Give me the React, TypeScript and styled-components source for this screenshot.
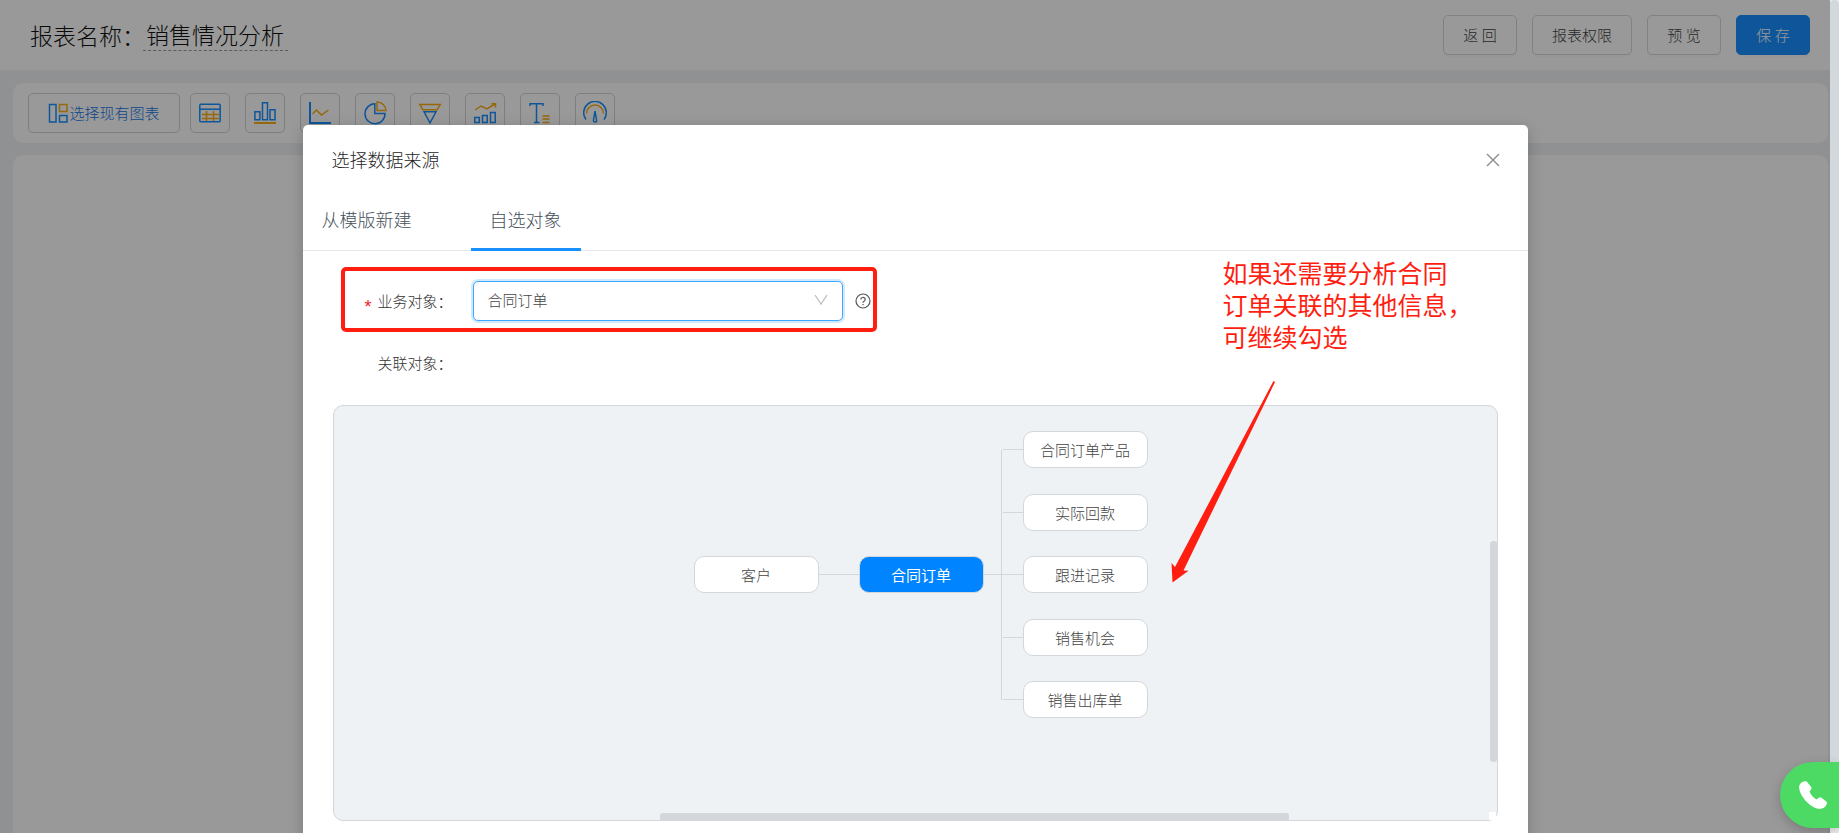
import React from "react";
import styled, { createGlobalStyle, css } from "styled-components";

const GlobalStyle = createGlobalStyle`
  *, *::before, *::after { box-sizing: border-box; }
  html, body, #root { height: 100%; margin: 0; }
  body {
    font-family: "Noto Sans CJK SC", "Liberation Sans", sans-serif;
    font-weight: 300;
    font-size: 15px;
    color: #444;
    overflow: hidden;
    background: #fff;
  }
  button, select { font: inherit; color: inherit; }
  h1, h2, p { margin: 0; font-weight: 300; }
`;

const BLUE = "#1890ff";
const ORANGE = "#faad14";
const LINE = "#d3d7db";
const RED = "#ff1e10";

const Shell = styled.div`
  display: flex;
  height: 100vh;
`;

const Page = styled.div`
  flex: 1;
  min-width: 0;
  position: relative;
  display: flex;
  flex-direction: column;
  overflow: hidden;
  background: #eff2f5;
`;

const PageScroll = styled.div`
  width: 9px;
  padding-bottom: 5px;
  background: #f0f0f0;
`;

const PageThumb = styled.div`
  height: 100%;
  border-radius: 4px;
  background: #d3d8dc;
`;

const Header = styled.header`
  flex: none;
  display: flex;
  align-items: center;
  justify-content: space-between;
  height: 70px;
  padding: 0 20px 0 30px;
  background: #fff;
`;

const Heading = styled.h1`
  display: flex;
  align-items: center;
  font-size: 23px;
  line-height: 28px;
  color: #111;
`;

const ReportName = styled.span`
  margin-left: -2px;
  padding: 0 4px 2px 3px;
  border-bottom: 1px dashed #999;
`;

const Actions = styled.div`
  display: flex;
  gap: 15px;
`;

const Button = styled.button<{ $primary?: boolean; $wide?: boolean }>`
  height: 40px;
  width: ${(p) => (p.$wide ? 100 : 74)}px;
  padding: 0 0 1px;
  border: 1px solid ${(p) => (p.$primary ? BLUE : "#d9d9d9")};
  border-radius: 5px;
  background: ${(p) => (p.$primary ? BLUE : "#fff")};
  color: ${(p) => (p.$primary ? "#fff" : "#444")};
  line-height: 22px;
  box-shadow: 0 2px 0 rgba(0, 0, 0, 0.02);
`;

const Toolbar = styled.div`
  flex: none;
  display: flex;
  align-items: center;
  gap: 15px;
  height: 60px;
  margin: 13px 2px 12px 13px;
  padding: 0 15px;
  border-radius: 10px;
  background: #fff;
`;

const PickButton = styled.button`
  display: flex;
  align-items: center;
  justify-content: center;
  gap: 1px;
  width: 152px;
  height: 40px;
  margin-right: -5px;
  padding: 0;
  border: 1px solid #d3d3d3;
  border-radius: 5px;
  background: #fff;
  color: #1677e6;
`;

const PickText = styled.span`
  padding-bottom: 2px;
`;

const ToolButton = styled.button`
  display: flex;
  align-items: center;
  justify-content: center;
  width: 40px;
  height: 40px;
  padding: 0;
  border: 1px solid #d3d3d3;
  border-radius: 5px;
  background: #fff;
`;

const Canvas = styled.main`
  flex: 1;
  margin: 0 2px 0 13px;
  border-radius: 10px 10px 0 0;
  background: #fff;
`;

const Mask = styled.div`
  position: absolute;
  inset: 0;
  display: flex;
  justify-content: center;
  padding: 125px 20px 0;
  background: rgba(0, 0, 0, 0.4);
`;

const Modal = styled.section`
  position: relative;
  width: 100%;
  max-width: 1225px;
  min-height: 720px;
  border-radius: 5px;
  background: #fff;
  box-shadow: 0 4px 15px rgba(0, 0, 0, 0.2);
`;

const ModalHead = styled.div`
  display: flex;
  align-items: center;
  justify-content: space-between;
  height: 70px;
  padding: 0 25px 0 29px;
`;

const ModalTitle = styled.h2`
  padding-bottom: 2px;
  font-size: 18px;
  line-height: 28px;
  color: #262626;
`;

const CloseButton = styled.button`
  display: flex;
  align-items: center;
  justify-content: center;
  width: 20px;
  height: 20px;
  padding: 0;
  border: 0;
  background: none;
`;

const Tabs = styled.div`
  display: flex;
  gap: 40px;
  height: 56px;
  border-bottom: 1px solid #e5e7e9;
`;

const Tab = styled.button<{ $active?: boolean }>`
  height: 56px;
  padding: 0 19px 5px;
  border: 0;
  border-bottom: 3px solid ${(p) => (p.$active ? BLUE : "transparent")};
  background: none;
  font-size: 18px;
  color: #45505a;
`;

const Form = styled.form`
  padding: 30px 30px 0;
`;

const Row = styled.div`
  display: flex;
  align-items: center;
  height: 40px;
  margin-bottom: 22px;
`;

const Label = styled.label<{ $required?: boolean }>`
  width: 140px;
  padding-left: 45px;
  line-height: 22px;
  color: #333;
  ${(p) =>
    p.$required &&
    css`
      padding-left: 32px;
      &::before {
        content: "*";
        display: inline-block;
        width: 13px;
        font-family: "Liberation Sans", sans-serif;
        font-size: 18px;
        line-height: 10px;
        vertical-align: -6px;
        color: #f5222d;
      }
    `}
`;

const SelectWrap = styled.div`
  position: relative;
  width: 370px;
  margin-right: 12px;
`;

const Select = styled.select`
  display: block;
  width: 100%;
  height: 40px;
  padding: 0 40px 4px 14px;
  appearance: none;
  border: 1px solid #40a9ff;
  border-radius: 5px;
  outline: none;
  background: #fff;
  box-shadow: 0 0 0 2px rgba(24, 144, 255, 0.2);
  color: #444;
`;

const SelectArrow = styled.svg`
  position: absolute;
  right: 15px;
  top: 13px;
  pointer-events: none;
`;

const Graph = styled.div`
  position: relative;
  height: 416px;
  margin: 0 30px;
  border: 1px solid ${LINE};
  border-radius: 10px;
  background: #eef2f5;
`;

const Node = styled.button<{ $x: number; $y: number; $root?: boolean }>`
  position: absolute;
  left: ${(p) => p.$x}px;
  top: ${(p) => p.$y}px;
  width: 125px;
  height: 37px;
  padding: 0 0 1px;
  border: 1px solid ${LINE};
  border-radius: 10px;
  background: ${(p) => (p.$root ? "#0084ff" : "#fff")};
  color: ${(p) => (p.$root ? "#fff" : "#444")};
  font-weight: ${(p) => (p.$root ? 400 : 300)};
`;

const Links = styled.svg`
  position: absolute;
  left: 0;
  top: 0;
`;

const ThumbY = styled.div`
  position: absolute;
  right: 0;
  top: 135px;
  width: 7px;
  height: 221px;
  border-radius: 3px;
  background: ${LINE};
`;

const ThumbX = styled.div`
  position: absolute;
  left: 326px;
  bottom: -1px;
  width: 629px;
  height: 8px;
  border-radius: 3px;
  background: ${LINE};
`;

const Corner = styled.div`
  position: absolute;
  right: 1px;
  bottom: 0;
  width: 7px;
  height: 8px;
  background: #fff;
`;

const Highlight = styled.div`
  position: absolute;
  left: 38px;
  top: 142px;
  width: 536px;
  height: 65px;
  border: 4px solid ${RED};
  border-radius: 5px;
  pointer-events: none;
`;

const Note = styled.p`
  position: absolute;
  left: 920px;
  top: 131px;
  font-size: 25px;
  line-height: 32px;
  font-weight: 400;
  color: ${RED};
  white-space: pre;
`;

const Arrow = styled.svg`
  position: absolute;
  left: 867px;
  top: 255px;
  pointer-events: none;
`;

const CallButton = styled.button`
  position: fixed;
  right: 0;
  bottom: 5px;
  display: flex;
  align-items: center;
  width: 59px;
  height: 66px;
  padding: 0 0 0 18px;
  border: 0;
  border-radius: 33px 0 0 33px;
  background: #4cd964;
  box-shadow: 0 4px 12px rgba(0, 0, 0, 0.2);
`;

function Icon({ children }: { children: React.ReactNode }) {
  return (
    <svg width="24" height="24" viewBox="0 0 24 24" fill="none" strokeWidth="1.5" aria-hidden="true">
      {children}
    </svg>
  );
}

const tools = [
  {
    name: "表格",
    icon: (
      <>
        <path d="M8.5 10v10M15.5 10v10M4 13.5h17M4 17.500h17" stroke={ORANGE} />
        <path d="M2 8.200h20" stroke={BLUE} />
        <rect x="1.800" y="3.200" width="20.400" height="17.600" rx="1" stroke={BLUE} />
      </>
    ),
  },
  {
    name: "柱状图",
    icon: (
      <>
        <path d="M1 22h22" stroke={ORANGE} strokeWidth="2" />
        <path d="M1.9 10.8h5v8h-5zM9.5 1.8h5v17h-5zM17 8.8h5v10h-5z" stroke={BLUE} />
      </>
    ),
  },
  {
    name: "折线图",
    icon: (
      <>
        <path d="M2 1v21h21" stroke={BLUE} strokeWidth="2" />
        <path d="M4.5 13l4-4 5 5 7-5" stroke={ORANGE} />
      </>
    ),
  },
  {
    name: "饼图",
    icon: (
      <>
        <path d="M11.8 2.8a10 10 0 1 0 10.200 9.800H11.800z" stroke={BLUE} />
        <path d="M14 1v8.6h9A9 9 0 0 0 14 1z" stroke={ORANGE} />
      </>
    ),
  },
  {
    name: "漏斗图",
    icon: (
      <>
        <path d="M1.8 3.5h20.4l-3 5.2H4.8z" stroke={ORANGE} />
        <path d="M6 10.8h12L12 22z" stroke={BLUE} />
      </>
    ),
  },
  {
    name: "双轴图",
    icon: (
      <>
        <path d="M2 9l6-4 6 3 8-5M18.5 2.8h4v4" stroke={ORANGE} />
        <path d="M1.8 16.500h4.500v5H1.800zM9.500 14.500h4.700v7H9.500zM17.500 11.500h4.700v10h-4.700z" stroke={BLUE} />
      </>
    ),
  },
  {
    name: "文本",
    icon: (
      <>
        <path d="M2 5V2.8h13V5M8.5 3v18.500M6 21.500h5.500" stroke={BLUE} />
        <path d="M14.5 15h7M14.5 18h7M14.5 21.500h7" stroke={ORANGE} />
      </>
    ),
  },
  {
    name: "仪表盘",
    icon: (
      <>
        <path d="M3.5 12.5a8.500 8.500 0 0 1 17 0" stroke={ORANGE} />
        <path d="M3 18.5A11.300 11.300 0 1 1 21 18.500M12 10l-1.600 9.500a1.600 1.600 0 1 0 3.200 0z" stroke={BLUE} />
      </>
    ),
  },
];

const related = [
  { name: "合同订单产品", y: 25 },
  { name: "实际回款", y: 88 },
  { name: "跟进记录", y: 150 },
  { name: "销售机会", y: 213 },
  { name: "销售出库单", y: 275 },
];

const note = "如果还需要分析合同\n订单关联的其他信息，\n可继续勾选";

export default function App() {
  return (
    <Shell>
      <GlobalStyle />
      <Page>
        <Header>
          <Heading>
            报表名称：<ReportName>销售情况分析</ReportName>
          </Heading>
          <Actions>
            <Button>返 回</Button>
            <Button $wide>报表权限</Button>
            <Button>预 览</Button>
            <Button $primary>保 存</Button>
          </Actions>
        </Header>
        <Toolbar>
          <PickButton>
            <svg width="20" height="20" viewBox="0 0 20 20" fill="none" strokeWidth="1.5" aria-hidden="true">
              <path d="M1.5 1.5h6.500v17.500H1.500zM11.500 12.500h7.500v6.500h-7.500z" stroke={BLUE} />
              <path d="M11.5 1.5h7.500v7h-7.500z" stroke={ORANGE} />
            </svg>
            <PickText>选择现有图表</PickText>
          </PickButton>
          {tools.map((t) => (
            <ToolButton key={t.name} aria-label={t.name}>
              <Icon>{t.icon}</Icon>
            </ToolButton>
          ))}
        </Toolbar>
        <Canvas />

        <Mask>
          <Modal role="dialog" aria-labelledby="source-title">
            <ModalHead>
              <ModalTitle id="source-title">选择数据来源</ModalTitle>
              <CloseButton aria-label="关闭">
                <svg width="14" height="14" viewBox="0 0 14 14" stroke="#8c8c8c" strokeWidth="1.4">
                  <path d="M1 1l12 12M13 1L1 13" />
                </svg>
              </CloseButton>
            </ModalHead>
            <Tabs role="tablist">
              <Tab role="tab" aria-selected="false">从模版新建</Tab>
              <Tab role="tab" aria-selected="true" $active>自选对象</Tab>
            </Tabs>
            <Form onSubmit={(e) => e.preventDefault()}>
              <Row>
                <Label htmlFor="biz-object" $required>业务对象：</Label>
                <SelectWrap>
                  <Select id="biz-object" defaultValue="order">
                    <option value="order">合同订单</option>
                  </Select>
                  <SelectArrow width="14" height="12" viewBox="0 0 14 12" fill="none" stroke="#bfbfbf" strokeWidth="1.3">
                    <path d="M1 1l6 9 6-9" />
                  </SelectArrow>
                </SelectWrap>
                <svg width="16" height="16" viewBox="0 0 16 16" fill="none" stroke="#555" strokeWidth="1.2" aria-hidden="true">
                  <circle cx="8" cy="8" r="7" />
                  <path d="M5.8 6.5a2.2 2 0 1 1 3.3 1.7c-.8.4-1.1.7-1.1 1.5M8 11v1.3" />
                </svg>
              </Row>
              <Row>
                <Label as="span">关联对象：</Label>
              </Row>
            </Form>
            <Graph>
              <Links width="820" height="414" fill="none" stroke={LINE} shapeRendering="crispEdges" aria-hidden="true">
                <path d="M485 168.5h41M649 168.5h41M667.5 44v250M669 43.5h21M669 106.5h21M669 231.5h21M669 293.5h21" />
              </Links>
              <Node $x={360} $y={150}>客户</Node>
              <Node $x={525} $y={150} $root>合同订单</Node>
              {related.map((item) => (
                <Node key={item.name} $x={689} $y={item.y}>{item.name}</Node>
              ))}
              <ThumbY />
              <ThumbX />
              <Corner />
            </Graph>
            <Highlight />
            <Note>{note}</Note>
            <Arrow width="106" height="204" viewBox="0 0 106 204" fill={RED} aria-hidden="true">
              <path d="M103.5 1l1.5 1L13.500 190.500l5 .3L2.500 202.500 1.500 183l3.500 4z" />
            </Arrow>
          </Modal>
        </Mask>
      </Page>
      <PageScroll>
        <PageThumb />
      </PageScroll>
      <CallButton aria-label="电话">
        <svg width="30" height="30" viewBox="0 0 30 30" fill="#fff" aria-hidden="true">
          <path d="M6 1.500C3 2 .5 5 1.200 8.500c1 8 11 19 19.500 20.300 3.500.5 6.500-1.500 8-4.600.6-1.500.3-2.200-.8-3L23.500 17.700c-1-.7-2-.7-3 .2l-2 1.600c-3-1.500-5.500-4.500-7-7.700l1.500-2.300c.7-1 .7-1.800 0-2.800L9.500 2.500C8.500 1.300 7.500 1.200 6 1.500z" />
        </svg>
      </CallButton>
    </Shell>
  );
}
